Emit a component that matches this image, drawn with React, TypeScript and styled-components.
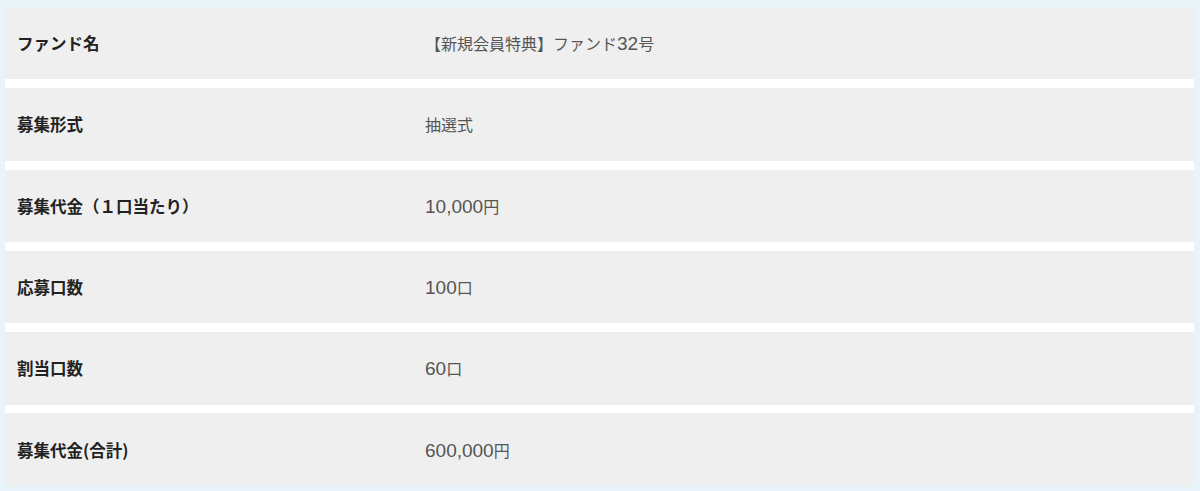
import styled, { createGlobalStyle } from 'styled-components';

const GlobalStyle = createGlobalStyle`
  html, body {
    margin: 0;
    padding: 0;
    background: #e8f3fa;
  }
`

const rows = [
  { label: 'ファンド名', value: '【新規会員特典】ファンド32号' },
  { label: '募集形式', value: '抽選式' },
  { label: '募集代金（１口当たり）', value: '10,000円' },
  { label: '応募口数', value: '100口' },
  { label: '割当口数', value: '60口' },
  { label: '募集代金(合計)', value: '600,000円' },
];

// digits are drawn a size up from the kanji, like the original page
function renderValue(text: string) {
  return text.split(/([0-9,]+)/).map((part, i) =>
    /^[0-9,]+$/.test(part) ? <Num key={i}>{part}</Num> : part
  );
}

export default function App() {
  return (
    <>
      <GlobalStyle />
      <Page>
        <Table>
          {rows.map((row) => (
            <Row key={row.label}>
              <Label>{row.label}</Label>
              <Value>{renderValue(row.value)}</Value>
            </Row>
          ))}
        </Table>
      </Page>
    </>
  );
}

const Page = styled.div`
  width: 1200px;
  height: 491px;
  box-sizing: border-box;
  padding: 7px 6px 5px 5px;
  background: #e8f3fa;
`

const Table = styled.div`
  background: #ffffff;
  display: flex;
  flex-direction: column;
  gap: 8.9px;
  height: 100%;
`

const Row = styled.div`
  display: grid;
  grid-template-columns: 420px 1fr;
  align-items: center;
  height: 72.4px;
  background: #efefef;
`

const Label = styled.div`
  padding-left: 12px;
  font-family: "Noto Sans CJK JP", sans-serif;
  font-weight: 700;
  font-size: 16.5px;
  color: #222;
`

const Value = styled.div`
  font-family: "Noto Sans CJK JP", sans-serif;
  font-size: 16px;
  color: #555;
`

const Num = styled.span`
  font-family: "Liberation Sans", sans-serif;
  font-size: 19px;
`
